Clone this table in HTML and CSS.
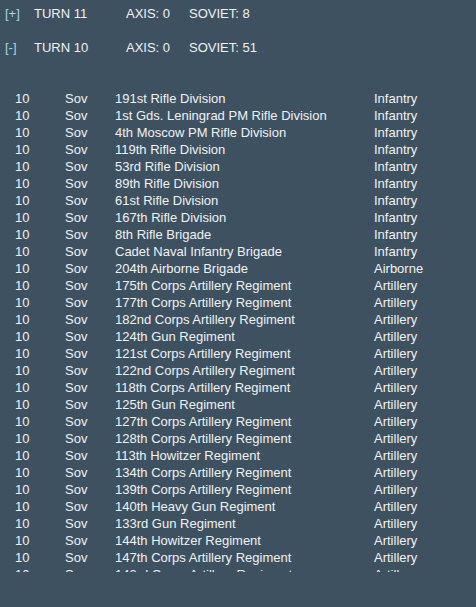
FILE: index.html
```html
<!DOCTYPE html>
<html>
<head>
<meta charset="utf-8">
<link rel="stylesheet" href="styles.css">
</head>
<body>
<div class="turns">
  <div class="turn"><span class="toggle">[+]</span><span class="tname">TURN 11</span><span class="axis">AXIS: 0</span><span class="soviet">SOVIET: 8</span></div>
  <div class="turn"><span class="toggle">[-]</span><span class="tname">TURN 10</span><span class="axis">AXIS: 0</span><span class="soviet">SOVIET: 51</span></div>
</div>
<div class="list">
  <div class="row"><span>10</span><span>Sov</span><span>191st Rifle Division</span><span>Infantry</span></div>
  <div class="row"><span>10</span><span>Sov</span><span>1st Gds. Leningrad PM Rifle Division</span><span>Infantry</span></div>
  <div class="row"><span>10</span><span>Sov</span><span>4th Moscow PM Rifle Division</span><span>Infantry</span></div>
  <div class="row"><span>10</span><span>Sov</span><span>119th Rifle Division</span><span>Infantry</span></div>
  <div class="row"><span>10</span><span>Sov</span><span>53rd Rifle Division</span><span>Infantry</span></div>
  <div class="row"><span>10</span><span>Sov</span><span>89th Rifle Division</span><span>Infantry</span></div>
  <div class="row"><span>10</span><span>Sov</span><span>61st Rifle Division</span><span>Infantry</span></div>
  <div class="row"><span>10</span><span>Sov</span><span>167th Rifle Division</span><span>Infantry</span></div>
  <div class="row"><span>10</span><span>Sov</span><span>8th Rifle Brigade</span><span>Infantry</span></div>
  <div class="row"><span>10</span><span>Sov</span><span>Cadet Naval Infantry Brigade</span><span>Infantry</span></div>
  <div class="row"><span>10</span><span>Sov</span><span>204th Airborne Brigade</span><span>Airborne</span></div>
  <div class="row"><span>10</span><span>Sov</span><span>175th Corps Artillery Regiment</span><span>Artillery</span></div>
  <div class="row"><span>10</span><span>Sov</span><span>177th Corps Artillery Regiment</span><span>Artillery</span></div>
  <div class="row"><span>10</span><span>Sov</span><span>182nd Corps Artillery Regiment</span><span>Artillery</span></div>
  <div class="row"><span>10</span><span>Sov</span><span>124th Gun Regiment</span><span>Artillery</span></div>
  <div class="row"><span>10</span><span>Sov</span><span>121st Corps Artillery Regiment</span><span>Artillery</span></div>
  <div class="row"><span>10</span><span>Sov</span><span>122nd Corps Artillery Regiment</span><span>Artillery</span></div>
  <div class="row"><span>10</span><span>Sov</span><span>118th Corps Artillery Regiment</span><span>Artillery</span></div>
  <div class="row"><span>10</span><span>Sov</span><span>125th Gun Regiment</span><span>Artillery</span></div>
  <div class="row"><span>10</span><span>Sov</span><span>127th Corps Artillery Regiment</span><span>Artillery</span></div>
  <div class="row"><span>10</span><span>Sov</span><span>128th Corps Artillery Regiment</span><span>Artillery</span></div>
  <div class="row"><span>10</span><span>Sov</span><span>113th Howitzer Regiment</span><span>Artillery</span></div>
  <div class="row"><span>10</span><span>Sov</span><span>134th Corps Artillery Regiment</span><span>Artillery</span></div>
  <div class="row"><span>10</span><span>Sov</span><span>139th Corps Artillery Regiment</span><span>Artillery</span></div>
  <div class="row"><span>10</span><span>Sov</span><span>140th Heavy Gun Regiment</span><span>Artillery</span></div>
  <div class="row"><span>10</span><span>Sov</span><span>133rd Gun Regiment</span><span>Artillery</span></div>
  <div class="row"><span>10</span><span>Sov</span><span>144th Howitzer Regiment</span><span>Artillery</span></div>
  <div class="row"><span>10</span><span>Sov</span><span>147th Corps Artillery Regiment</span><span>Artillery</span></div>
  <div class="row"><span>10</span><span>Sov</span><span>143rd Corps Artillery Regiment</span><span>Artillery</span></div>
</div>
</body>
</html>
```
FILE: styles.css
```css
html, body {
  margin: 0;
  padding: 0;
  background: #3e5161;
  height: 100%;
}
body {
  font-family: "Liberation Sans", Arial, sans-serif;
  font-size: 13px;
  color: #f0f2f3;
  overflow: hidden;
}
.turns {
  padding: 5px 0 0 5px;
  display: flex;
  flex-direction: column;
  gap: 17px;
}
.turn {
  display: grid;
  grid-template-columns: 29px 92px 63px auto;
  line-height: 17px;
  height: 17px;
}
.toggle {
  color: #a9d6e4;
}
.list {
  margin-top: 34px;
  height: 482px;
  overflow: hidden;
}
.row {
  display: grid;
  grid-template-columns: 50px 50px 259px auto;
  padding-left: 15px;
  line-height: 17px;
  height: 17px;
  white-space: nowrap;
}
```
